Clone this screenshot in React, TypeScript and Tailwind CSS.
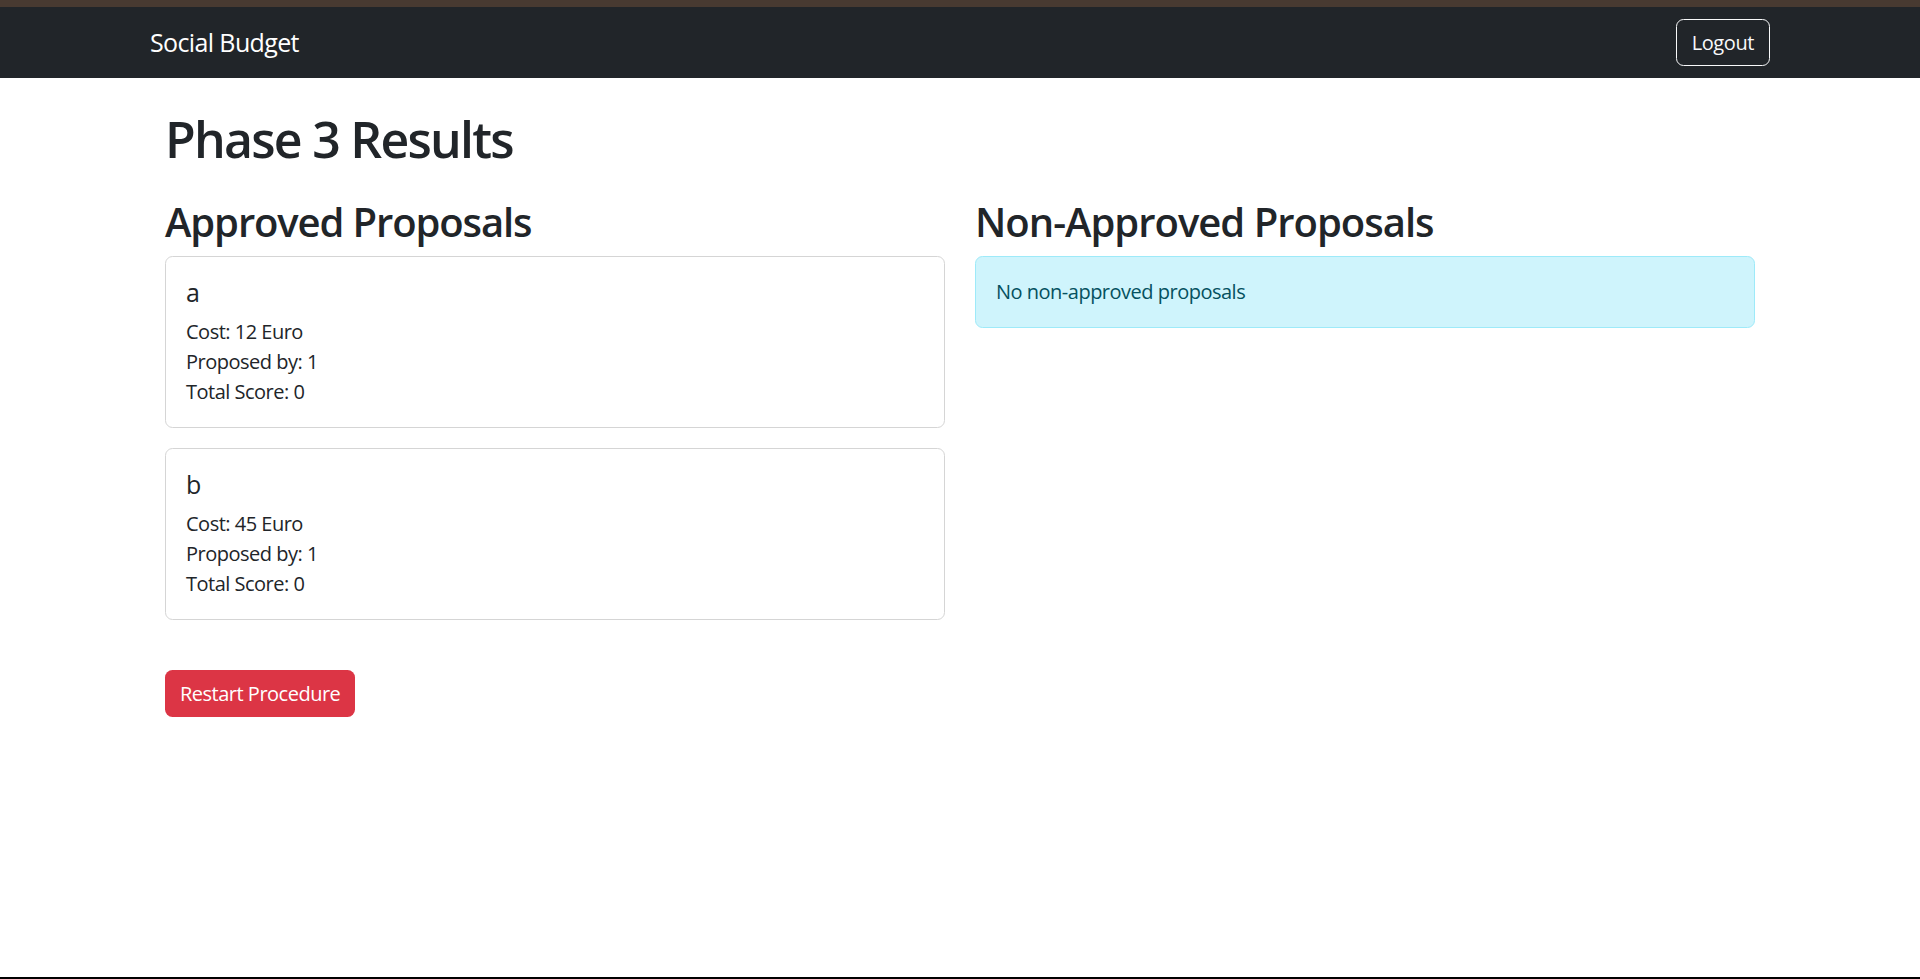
const approved = [
  { id: 1, name: "a", cost: 12, proposer: 1, score: 0 },
  { id: 2, name: "b", cost: 45, proposer: 1, score: 0 },
];

const font = { fontFamily: '"Open Sans", "Noto Sans", sans-serif' };

function ProposalCard({ p }: { p: (typeof approved)[number] }) {
  return (
    <div className="mb-5 rounded-[7.5px] border border-[#d5d5d5] bg-white p-5">
      <h5 className="mb-[10px] text-[25px] leading-[30px] font-medium tracking-[-0.02em] text-[#212529]">{p.name}</h5>
      <div className="text-[20px] leading-[30px] tracking-[-0.025em] text-[#212529]">
        <div>Cost: {p.cost} Euro</div>
        <div>Proposed by: {p.proposer}</div>
        <div>Total Score: {p.score}</div>
      </div>
    </div>
  );
}

export default function App() {
  return (
    <div className="flex h-[979px] flex-col overflow-hidden bg-white" style={font}>
      <div className="h-[7px] bg-[#483a31]"></div>
      <nav className="h-[71px] bg-[#212529]">
        <div className="mx-auto flex h-full w-[1650px] items-center justify-between px-[15px]">
          <span className="text-[25px] leading-[37px] tracking-[-0.025em] text-white">Social Budget</span>
          <button className="h-[47px] rounded-[7.5px] border border-[#f8f9fa] px-[15px] text-[20px] leading-[30px] tracking-[-0.02em] text-[#f8f9fa]">
            Logout
          </button>
        </div>
      </nav>

      <main className="mx-auto w-[1650px] flex-1 px-[30px] text-[#212529]">
        <h1 className="mt-[31px] mb-[10px] text-[50px] leading-[60px] font-semibold tracking-[-0.035em]">Phase 3 Results</h1>

        <div className="mt-[29px] grid grid-cols-2 gap-[30px]">
          <div>
            <h2 className="mb-[10px] text-[40px] leading-[48px] font-semibold tracking-[-0.028em]">Approved Proposals</h2>
            {approved.map((p) => (
              <ProposalCard key={p.id} p={p} />
            ))}
          </div>
          <div>
            <h2 className="mb-[10px] text-[40px] leading-[48px] font-semibold tracking-[-0.025em]">Non-Approved Proposals</h2>
            <div className="rounded-[7.5px] border border-[#9eeaf9] bg-[#cff4fc] px-5 py-5 text-[20px] leading-[30px] tracking-[-0.025em] text-[#055160]">
              No non-approved proposals
            </div>
          </div>
        </div>

        <button className="mt-[30px] h-[47px] rounded-[7.5px] bg-[#dc3545] px-[15px] text-[20px] leading-[30px] tracking-[-0.025em] text-white">
          Restart Procedure
        </button>
      </main>

      <div className="h-[2px] bg-black"></div>
    </div>
  );
}
